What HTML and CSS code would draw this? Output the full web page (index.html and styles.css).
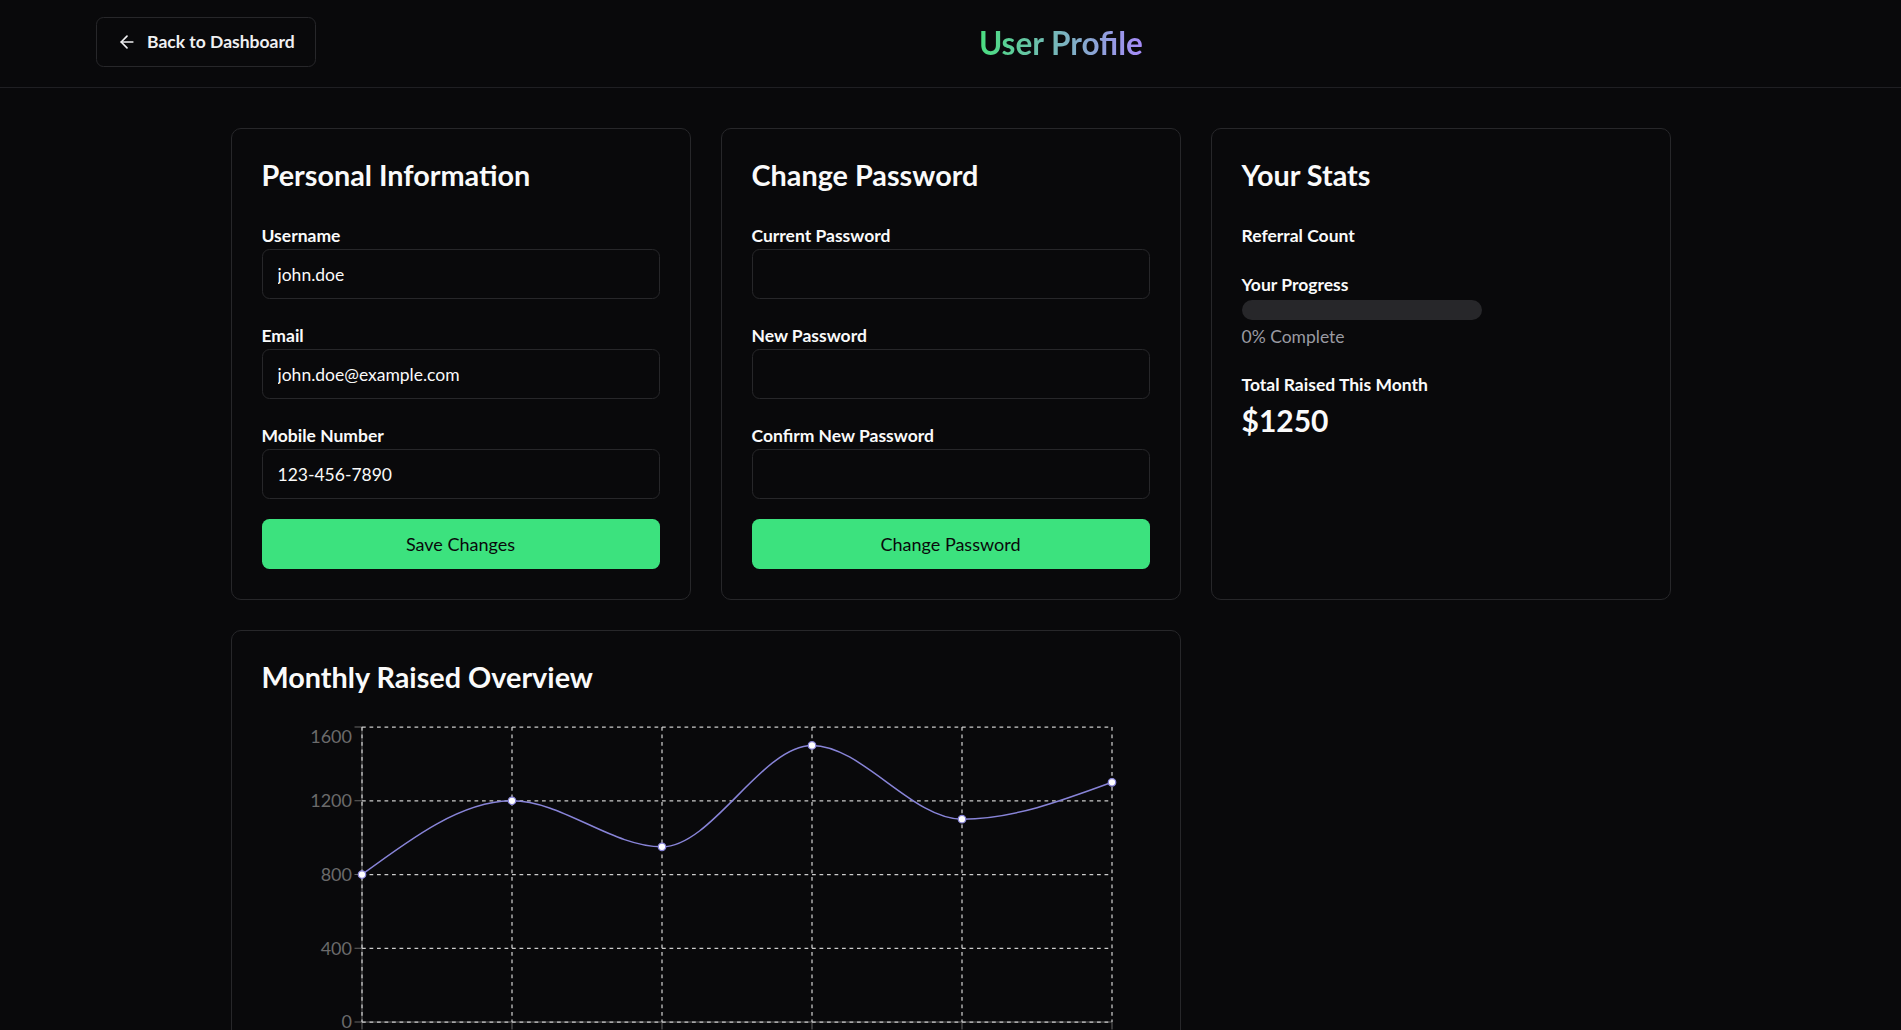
FILE: index.html
```html
<!DOCTYPE html>
<html lang="en">
<head>
<meta charset="utf-8">
<title>User Profile</title>
<link rel="stylesheet" href="styles.css">
</head>
<body>
<header class="topbar">
  <button class="back-btn" type="button">
    <svg viewBox="0 0 24 24" fill="none" stroke="currentColor" stroke-width="2" stroke-linecap="round" stroke-linejoin="round"><path d="m12 19-7-7 7-7"/><path d="M19 12H5"/></svg>
    <span>Back to Dashboard</span>
  </button>
  <h1 class="page-title"><span>User Profile</span></h1>
</header>

<main class="main">
  <section class="card">
    <h2 class="card-title">Personal Information</h2>
    <div class="fields">
      <div class="field">
        <label class="label">Username</label>
        <input class="input" type="text" value="john.doe">
      </div>
      <div class="field">
        <label class="label">Email</label>
        <input class="input" type="text" value="john.doe@example.com">
      </div>
      <div class="field">
        <label class="label">Mobile Number</label>
        <input class="input" type="text" value="123-456-7890">
      </div>
    </div>
    <button class="btn-primary" type="button">Save Changes</button>
  </section>

  <section class="card">
    <h2 class="card-title">Change Password</h2>
    <div class="fields">
      <div class="field">
        <label class="label">Current Password</label>
        <input class="input" type="password">
      </div>
      <div class="field">
        <label class="label">New Password</label>
        <input class="input" type="password">
      </div>
      <div class="field">
        <label class="label">Confirm New Password</label>
        <input class="input" type="password">
      </div>
    </div>
    <button class="btn-primary" type="button">Change Password</button>
  </section>

  <section class="card">
    <h2 class="card-title">Your Stats</h2>
    <div class="stat stat-referral">
      <div class="label">Referral Count</div>
    </div>
    <div class="stat">
      <div class="label">Your Progress</div>
      <div class="progress"><div class="progress-fill" style="width:0%"></div></div>
      <div class="muted">0% Complete</div>
    </div>
    <div class="stat">
      <div class="label">Total Raised This Month</div>
      <div class="amount">$1250</div>
    </div>
  </section>

  <section class="card card-wide">
    <h2 class="card-title chart-title">Monthly Raised Overview</h2>
    <svg class="chart" width="888" height="375">
      <g class="axis-line">
        <line x1="100" y1="8" x2="100" y2="303"/>
        <line x1="100" y1="303" x2="850" y2="303"/>
        <line x1="92.5" y1="8" x2="100" y2="8"/>
        <line x1="92.5" y1="81.75" x2="100" y2="81.75"/>
        <line x1="92.5" y1="155.5" x2="100" y2="155.5"/>
        <line x1="92.5" y1="229.25" x2="100" y2="229.25"/>
        <line x1="92.5" y1="303" x2="100" y2="303"/>
        <line x1="100" y1="303" x2="100" y2="310.5"/>
        <line x1="250" y1="303" x2="250" y2="310.5"/>
        <line x1="400" y1="303" x2="400" y2="310.5"/>
        <line x1="550" y1="303" x2="550" y2="310.5"/>
        <line x1="700" y1="303" x2="700" y2="310.5"/>
        <line x1="850" y1="303" x2="850" y2="310.5"/>
      </g>
      <g class="grid">
        <line x1="100" y1="8" x2="850" y2="8"/>
        <line x1="100" y1="81.75" x2="850" y2="81.75"/>
        <line x1="100" y1="155.5" x2="850" y2="155.5"/>
        <line x1="100" y1="229.25" x2="850" y2="229.25"/>
        <line x1="100" y1="303" x2="850" y2="303"/>
        <line x1="100" y1="8" x2="100" y2="303"/>
        <line x1="250" y1="8" x2="250" y2="303"/>
        <line x1="400" y1="8" x2="400" y2="303"/>
        <line x1="550" y1="8" x2="550" y2="303"/>
        <line x1="700" y1="8" x2="700" y2="303"/>
        <line x1="850" y1="8" x2="850" y2="303"/>
      </g>
      <g class="tick-label y-labels">
        <text x="90" y="23.5">1600</text>
        <text x="90" y="88">1200</text>
        <text x="90" y="161.7">800</text>
        <text x="90" y="235.5">400</text>
        <text x="90" y="309.2">0</text>
      </g>
      <g class="tick-label x-labels">
        <text x="100" y="332">Jan</text>
        <text x="250" y="332">Feb</text>
        <text x="400" y="332">Mar</text>
        <text x="550" y="332">Apr</text>
        <text x="700" y="332">May</text>
        <text x="850" y="332">Jun</text>
      </g>
      <path class="series" d="M100,155.5 C150,118.63 200,81.75 250,81.75 C300,81.75 350,127.84 400,127.84 C450,127.84 500,26.44 550,26.44 C600,26.44 650,100.19 700,100.19 C750,100.19 800,81.75 850,63.31"/>
      <g class="dots">
        <circle cx="100" cy="155.5" r="3.75"/>
        <circle cx="250" cy="81.75" r="3.75"/>
        <circle cx="400" cy="127.84" r="3.75"/>
        <circle cx="550" cy="26.44" r="3.75"/>
        <circle cx="700" cy="100.19" r="3.75"/>
        <circle cx="850" cy="63.31" r="3.75"/>
      </g>
    </svg>
  </section>
</main>
</body>
</html>
```
FILE: styles.css
```css
* {
  box-sizing: border-box;
}

html,
body {
  margin: 0;
}

body {
  background: #09090b;
  color: #fafafa;
  font-family: "Lato", "Open Sans", sans-serif;
}

.topbar {
  display: flex;
  align-items: center;
  padding: 17px 95px 20px 96px;
  border-bottom: 1px solid #1f1f23;
}

.back-btn {
  display: inline-flex;
  align-items: center;
  gap: 10px;
  height: 50px;
  padding: 0 20px;
  border: 1px solid #27272a;
  border-radius: 7.5px;
  background: transparent;
  color: #f0f0f2;
  font-family: "Lato", sans-serif;
  font-size: 17.5px;
  font-weight: 700;
  line-height: 1;
}

.back-btn svg {
  width: 20px;
  height: 20px;
}

.page-title {
  flex: 1;
  margin: 0;
  padding-top: 2px;
  text-align: center;
  font-size: 31.5px;
  line-height: 30px;
  font-weight: 700;
}

.page-title span {
  background: linear-gradient(90deg, #4ade80, #a78bfa);
  -webkit-background-clip: text;
  background-clip: text;
  color: transparent;
}

.main {
  width: 1440px;
  margin: 0 auto;
  padding: 40px 0 40px;
  display: grid;
  grid-template-columns: repeat(3, 1fr);
  gap: 30px;
}

.card {
  border: 1px solid #27272a;
  border-radius: 10px;
  padding: 30px;
  background: #09090b;
}

.card-wide {
  grid-column: span 2;
}

.card-title {
  margin: 0 0 35px;
  font-size: 28.8px;
  line-height: 33px;
  font-weight: 700;
}

.chart-title {
  margin-bottom: 25px;
}

.fields {
  display: flex;
  flex-direction: column;
  gap: 28px;
}

.field {
  display: flex;
  flex-direction: column;
  gap: 4.5px;
}

.label {
  display: block;
  font-size: 17.5px;
  line-height: 17.5px;
  font-weight: 700;
}

.input {
  display: block;
  width: 100%;
  height: 50px;
  padding: 0 15px;
  border: 1px solid #27272a;
  border-radius: 7.5px;
  background: transparent;
  color: #fafafa;
  font-family: "Lato", sans-serif;
  font-size: 17.5px;
  outline: none;
}

.btn-primary {
  display: block;
  width: 100%;
  height: 50px;
  margin-top: 20px;
  border: 0;
  border-radius: 7.5px;
  background: #3ce27e;
  color: #09090b;
  font-family: "Lato", sans-serif;
  font-size: 18px;
  font-weight: 400;
}

.stat-referral {
  margin-bottom: 31.5px;
}

.progress {
  width: 240px;
  height: 20px;
  margin-top: 6px;
  border-radius: 999px;
  background: #27272a;
  overflow: hidden;
}

.progress-fill {
  height: 100%;
  background: #3ce27e;
}

.muted {
  margin-top: 8.3px;
  font-size: 17.5px;
  line-height: 17.5px;
  color: #9a9aa2;
}

.stat:last-child {
  margin-top: 31px;
}

.amount {
  margin-top: 11.5px;
  font-size: 30px;
  line-height: 30px;
  font-weight: 700;
}

.chart {
  display: block;
}

.axis-line line {
  stroke: #666;
  stroke-width: 1;
}

.grid line {
  stroke: #cccccc;
  stroke-width: 1.25;
  stroke-dasharray: 3.75 3.75;
}

.tick-label text {
  fill: #6b6b6b;
  font-family: "Lato", sans-serif;
  font-size: 18px;
}

.y-labels text {
  text-anchor: end;
}

.x-labels text {
  text-anchor: middle;
}

.series {
  fill: none;
  stroke: #8884d8;
  stroke-width: 1.5;
}

.dots circle {
  fill: #ffffff;
  stroke: #8884d8;
  stroke-width: 1.25;
}
```
